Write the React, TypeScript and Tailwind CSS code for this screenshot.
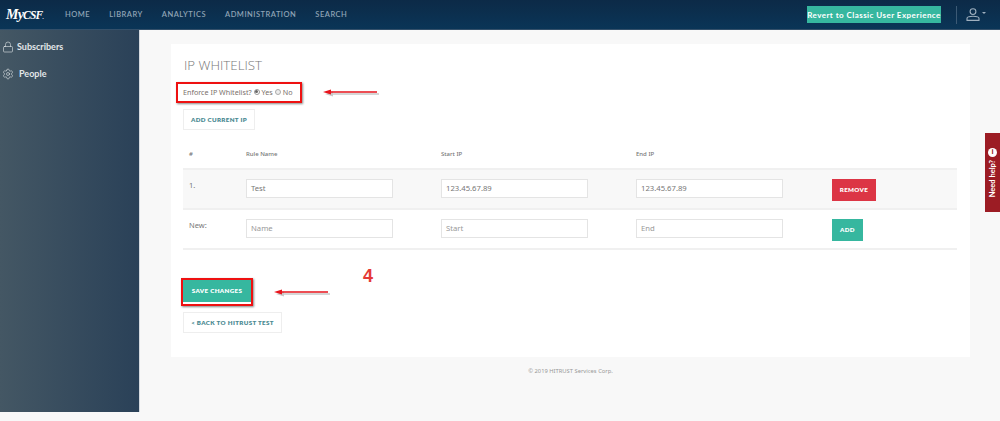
import { Lock, Settings } from 'lucide-react'

const sans = "font-['Noto_Sans',sans-serif]"
const btnText = "font-['Lato',sans-serif] text-[6.2px] font-extrabold tracking-[0.35px]"

function Field({ value, placeholder }: { value?: string; placeholder?: string }) {
  return (
    <div className={`flex h-[19px] w-[147px] items-center border border-[#e4e4e4] bg-white px-[4px] text-[7.7px] ${value ? 'text-[#777]' : 'text-[#999]'}`}>
      {value ?? placeholder}
    </div>
  )
}

function Row({ label, name, start, end, last, children }: { label: string; name: string; start: string; end: string; last?: boolean; children: React.ReactNode }) {
  return (
    <div className={`flex h-[40px] border-b-2 border-[#f0f0f0] ${last ? 'bg-white' : 'bg-[#f8f8f8]'}`}>
      <div className="w-[63px] pt-[10px] pl-[6px] text-[7.5px] text-[#777]">{label}</div>
      <div className="w-[195px] pt-[9px]"><Field value={name || undefined} placeholder="Name" /></div>
      <div className="w-[195px] pt-[9px]"><Field value={start || undefined} placeholder="Start" /></div>
      <div className="w-[196px] pt-[9px]"><Field value={end || undefined} placeholder="End" /></div>
      <div className="pt-[9px]">{children}</div>
    </div>
  )
}

function Arrow({ className }: { className: string }) {
  return (
    <svg className={`absolute ${className}`} width="58" height="10" viewBox="0 0 58 10">
      <path d="M2 6 L10 3.5 L10 5.3 L56 5.3 L56 6.8 L10 6.8 L10 8.5 Z" fill="#888" opacity="0.45" transform="translate(1 1)" />
      <path d="M1 5 L9 2.5 L9 4.3 L55 4.3 L55 5.8 L9 5.8 L9 7.5 Z" fill="#e8141c" />
    </svg>
  )
}

export default function App() {
  return (
    <div className={`relative h-[421px] w-[1000px] overflow-hidden bg-[#f8f8f8] ${sans}`}>
      {/* HEADER */}
      <header className="flex h-[30px] items-center border-b border-[#34506a] bg-gradient-to-b from-[#0c2a47] to-[#0a3557]">
        <div className="ml-[6px] w-[59px] font-['Liberation_Serif',serif] text-[14px] font-bold tracking-[-0.8px] text-white italic">My<span className="text-[11.5px]">CSF</span><span className="text-[6px]">.</span></div>
        <nav className="flex gap-[19px] font-['Lato',sans-serif] text-[7.5px] font-semibold tracking-[0.5px] text-[#8fa3b5]">
          <span>HOME</span>
          <span>LIBRARY</span>
          <span>ANALYTICS</span>
          <span>ADMINISTRATION</span>
          <span>SEARCH</span>
        </nav>
        <button className="ml-auto flex h-[17px] w-[134px] items-center justify-center bg-[#36b79f] font-['Lato',sans-serif] text-[8px] font-bold tracking-[0.45px] whitespace-nowrap text-white">
          Revert to Classic User Experience
        </button>
        <div className="ml-[15px] h-[18px] w-px bg-[#3c5a75]" />
        <div className="mr-[14px] ml-[9px] flex items-center text-[#9fb0bf]">
          <svg width="14" height="13" viewBox="0 0 14 13" fill="none" stroke="currentColor" strokeWidth="1.1">
            <circle cx="7" cy="3.6" r="2.9" />
            <path d="M1 12.4 V10.4 C1 9.2 3.5 8.3 7 8.3 C10.5 8.3 13 9.2 13 10.4 V12.4 Z" />
          </svg>
          <span className="mb-[3px] ml-[2px] border-x-[2px] border-t-[2px] border-x-transparent border-t-[#9fb0bf]" />
        </div>
      </header>

      <div className="flex h-[382px]">
        {/* SIDEBAR */}
        <aside className="w-[140px] shrink-0 border-r border-[#d5dadf] bg-gradient-to-r from-[#445764] to-[#2a4158] pt-[9px] font-['Lato',sans-serif] text-[9px] font-bold text-[#e3e7ea]">
          <div className="flex h-[16px] items-center gap-[3px] pl-[2px]">
            <Lock size={12} strokeWidth={1.2} />
            <span>Subscribers</span>
          </div>
          <div className="mt-[11px] flex h-[16px] items-center gap-[5px] pl-[2px]">
            <Settings size={12} strokeWidth={1.2} />
            <span>People</span>
          </div>
        </aside>

        {/* CONTENT */}
        <main className="flex-1 pt-[14px] pl-[31px]">
          <section className="h-[313px] w-[799px] bg-white pt-[12px] pl-[12px]">
            <h1 className="ml-[1px] font-['Open_Sans',sans-serif] text-[13.3px] leading-[18px] font-light text-[#777]">IP WHITELIST</h1>
            <div className="mt-[12px] flex h-[12px] items-center text-[7.2px] text-[#7a6f6a]">
              Enforce IP Whitelist?
              <span className="mx-[2px] mb-[1px] flex h-[6px] w-[6px] items-center justify-center rounded-full border border-[#999] bg-white"><span className="h-[3px] w-[3px] rounded-full bg-[#666]" /></span>
              Yes
              <span className="mx-[2px] mb-[1px] h-[6px] w-[6px] rounded-full border border-[#aaa] bg-[#eee]" />
              No
            </div>
            <button className={`mt-[11px] block h-[21px] w-[72px] border border-[#eeeeee] bg-white text-[#4b8a92] ${btnText}`}>ADD CURRENT IP</button>

            <div className="mt-[10px] w-[774px]">
              <div className="flex h-[30px] items-center border-b-2 border-[#f0f0f0] pt-[1px] text-[6px] font-medium text-[#777]">
                <div className="w-[63px] pl-[6px]">#</div>
                <div className="w-[195px]">Rule Name</div>
                <div className="w-[195px]">Start IP</div>
                <div>End IP</div>
              </div>
              <Row label="1." name="Test" start="123.45.67.89" end="123.45.67.89">
                <button className={`block h-[22px] w-[44px] bg-[#dc3545] text-white ${btnText}`}>REMOVE</button>
              </Row>
              <Row label="New:" name="" start="" end="" last>
                <button className={`block h-[22px] w-[31px] bg-[#36b79f] text-white ${btnText}`}>ADD</button>
              </Row>
            </div>

            <button className={`mt-[30px] block h-[22px] w-[68px] bg-[#36b79f] text-white ${btnText}`}>SAVE CHANGES</button>
            <button className={`mt-[10px] block h-[21px] w-[99px] border border-[#eeeeee] bg-white text-[#4b8a92] ${btnText}`}>&lt; BACK TO HITRUST TEST</button>
          </section>
          <footer className="mt-[10px] w-[799px] text-center text-[5.8px] text-[#999]">© 2019 HITRUST Services Corp.</footer>
        </main>
      </div>

      {/* help tab */}
      <div className="absolute top-[133px] left-[985px] flex h-[79px] w-[15px] flex-col items-center bg-[#9c1c24] pt-[15px]">
        <span className="flex h-[9px] w-[9px] items-center justify-center rounded-full bg-white text-[7px] font-bold text-[#9c1c24]">i</span>
        <span className="mt-[3px] rotate-180 font-['Lato',sans-serif] text-[7.5px] font-bold text-white [writing-mode:vertical-rl]">Need help?</span>
      </div>

      {/* annotations */}
      <div className="absolute top-[82px] left-[176px] h-[21px] w-[126px] border-2 border-[#ee1111] shadow-[1px_1px_2px_#888]" />
      <div className="absolute top-[278px] left-[181px] h-[28px] w-[72px] border-2 border-[#ee1111] shadow-[1px_1px_2px_#888]" />
      <Arrow className="top-[87px] left-[322px]" />
      <Arrow className="top-[287px] left-[273px]" />
      <div className="absolute top-[266px] left-[363px] font-['Liberation_Sans',sans-serif] text-[18px] leading-[20px] font-semibold text-[#e53935]">4</div>
    </div>
  )
}
